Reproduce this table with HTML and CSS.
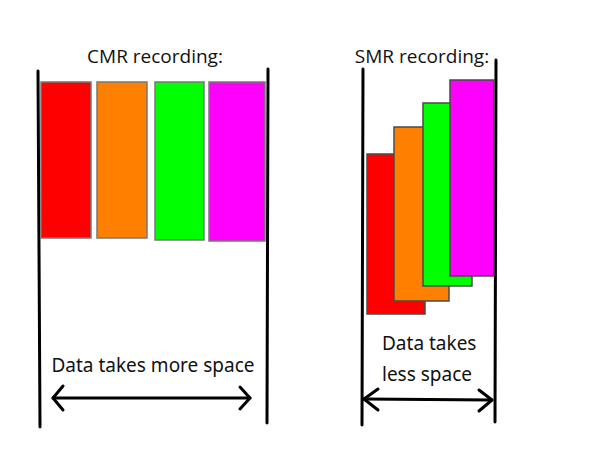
FILE: index.html
```html
<!DOCTYPE html>
<html lang="en">
<head>
<meta charset="utf-8">
<title>CMR vs SMR recording</title>
<link rel="stylesheet" href="styles.css">
</head>
<body>
<div class="canvas">
<svg class="diagram" width="601" height="454" viewBox="0 0 601 454" xmlns="http://www.w3.org/2000/svg">
  <!-- CMR -->
  <text class="title" x="155" y="63" text-anchor="middle">CMR recording:</text>
  <line class="wall" x1="38" y1="71" x2="40" y2="427"/>
  <line class="wall" x1="268" y1="69" x2="267" y2="423"/>
  <rect class="block red" x="41" y="82" width="50" height="156"/>
  <rect class="block orange" x="97" y="82" width="50" height="156"/>
  <rect class="block green" x="155" y="82" width="49" height="158"/>
  <rect class="block magenta" x="209" y="82" width="56" height="159"/>
  <text class="label" x="153" y="372" text-anchor="middle">Data takes more space</text>
  <g class="arrow">
    <line x1="53" y1="398" x2="250" y2="398"/>
    <polyline points="63,386 53,398 63,410"/>
    <polyline points="240,387 250,398 240,409"/>
  </g>

  <!-- SMR -->
  <text class="title" x="422" y="63" text-anchor="middle">SMR recording:</text>
  <line class="wall" x1="363" y1="69" x2="362" y2="425"/>
  <line class="wall" x1="496" y1="60" x2="495" y2="422"/>
  <rect class="block dark red" x="367" y="154" width="58" height="160"/>
  <rect class="block dark orange" x="394" y="127" width="55" height="174"/>
  <rect class="block dark green" x="423" y="103" width="49" height="183"/>
  <rect class="block dark magenta" x="450" y="80" width="44" height="196"/>
  <text class="label" x="382" y="350">Data takes</text>
  <text class="label" x="382" y="381">less space</text>
  <g class="arrow">
    <line x1="364" y1="399" x2="492" y2="400"/>
    <polyline points="378,389 364,399 378,410"/>
    <polyline points="479,390 492,400 479,411"/>
  </g>
</svg>
</div>
</body>
</html>
```

FILE: styles.css
```css
html, body {
  margin: 0;
  padding: 0;
  background: #ffffff;
}

.canvas {
  width: 601px;
  height: 454px;
  overflow: hidden;
}

.diagram {
  display: block;
}

.title {
  font-family: "Open Sans", "Noto Sans", sans-serif;
  font-size: 19px;
  fill: #111111;
}

.label {
  font-family: "Noto Sans", "Open Sans", sans-serif;
  font-size: 19px;
  fill: #111111;
}

.wall {
  stroke: #000000;
  stroke-width: 3;
  stroke-linecap: round;
}

.block {
  stroke: #777777;
  stroke-width: 1.5;
}

.block.dark {
  stroke: #4a4a4a;
}

.red { fill: #ff0000; }
.orange { fill: #ff8000; }
.green { fill: #00ff00; }
.magenta { fill: #ff00ff; }

.arrow line,
.arrow polyline {
  stroke: #000000;
  stroke-width: 3;
  fill: none;
  stroke-linecap: round;
  stroke-linejoin: round;
}
```
